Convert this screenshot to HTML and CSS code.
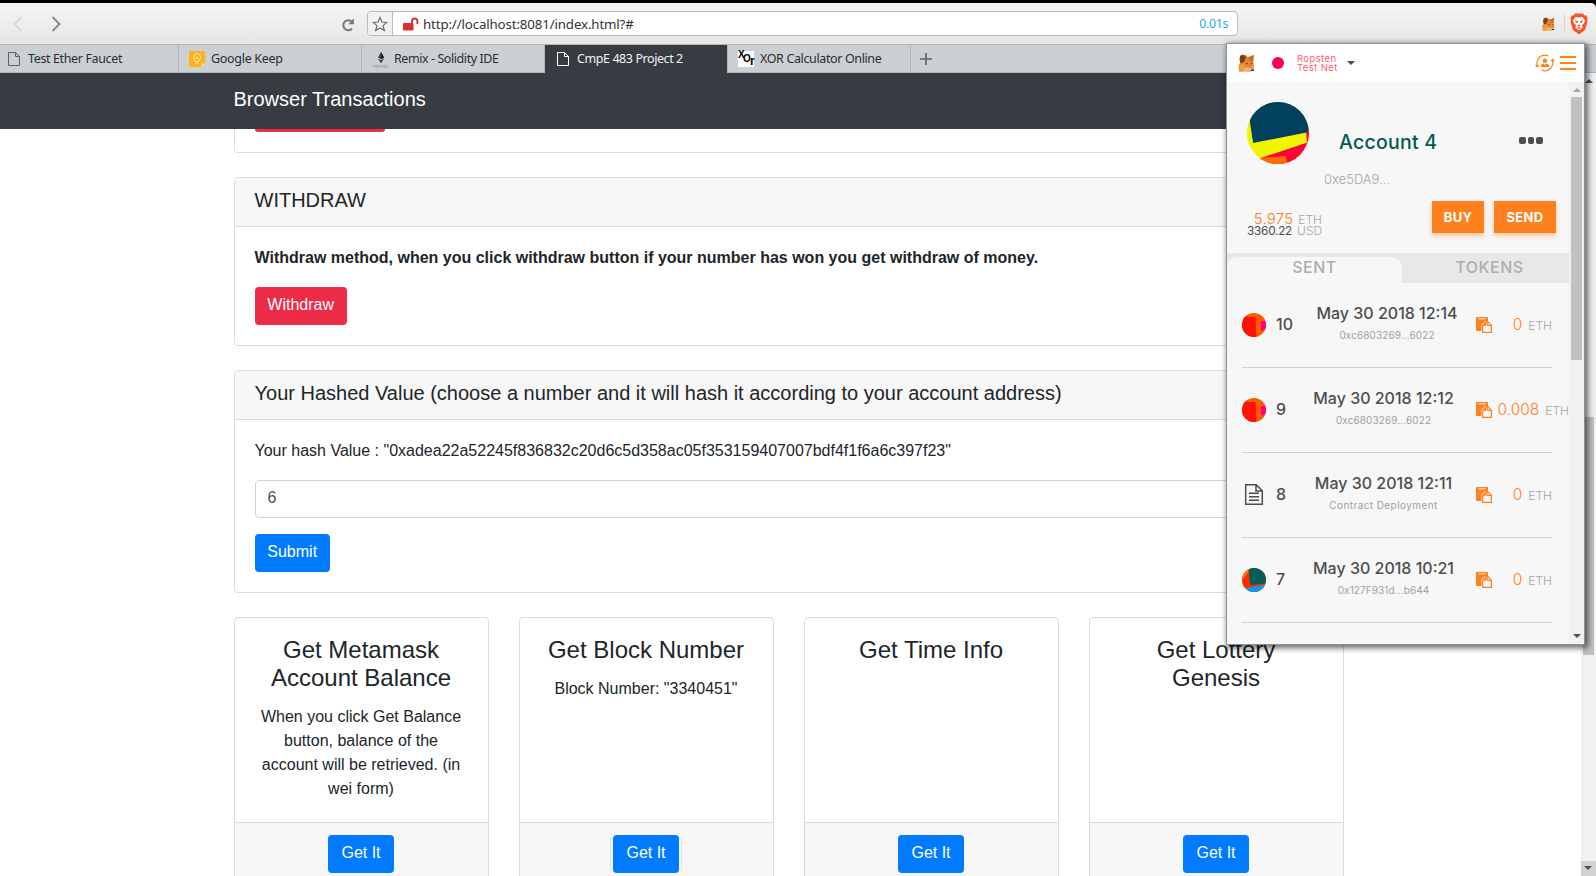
FILE: index.html
```html
<!DOCTYPE html>
<html lang="en">
<head>
<meta charset="utf-8">
<title>CmpE 483 Project 2</title>
<link rel="stylesheet" href="styles.css">
</head>
<body>
<svg class="defs" width="0" height="0" aria-hidden="true">
  <symbol id="page" viewBox="0 0 12 14"><path d="M.5.5h7l4 4v9H.5zM7.500.5v4h4" fill="none" stroke="currentColor"/></symbol>
  <symbol id="fox" viewBox="0 0 17 18">
    <path d="M2 2 7 .5 10 3l6-2-.6 7 .6 6-3 3.500H1L.5 12 2 9z" fill="#e8822f"/>
    <path d="M2 2 4.500.5 8 3 6 8 3 9.500 1.500 6z" fill="#7a3f1c"/>
    <path d="m10 3.500 6-2.500-1 5-2 2z" fill="#c96a2b"/>
    <path d="m1 12 4-3 2 4-2 4.500H1z" fill="#f29a3c"/>
    <path d="m7 13 4 1 4-1-2 4H5z" fill="#f0b27a"/>
    <path d="m8 9 2 .3-.5 1.200zM13 9l2 .2-1 1zM13 15.500h3.500L15.500 17H13z" fill="#3a2a22"/>
  </symbol>
  <symbol id="clip" viewBox="0 0 16 16">
    <path d="M0 1.200C0 .5.500 0 1.200 0h9.600c.7 0 1.200.5 1.200 1.200V4H9L5.500 7.500V14H1.200C.5 14 0 13.500 0 12.800z" fill="#ff801e"/>
    <path d="M2.500 1h7v1.500h-7z" fill="#ffc79c"/>
    <path d="M10.200 4.600h1.600l3.600 3.600v7.200H6.600V8.400z" fill="#f7f7f7" stroke="#ff801e" stroke-width="1.200"/>
    <path d="M10.500 4v4.800H6z" fill="#ff801e"/>
    <path d="M11.700 4.600v3.800h3.700" fill="none" stroke="#ff801e" stroke-width="1.100"/>
  </symbol>
  <symbol id="ident-a" viewBox="0 0 24 24">
    <clipPath id="ca"><circle cx="12" cy="12" r="12"/></clipPath>
    <g clip-path="url(#ca)"><path d="M0 0h24v24H0z" fill="#ff5a00"/><path d="M0 0h8L0 8z" fill="#c8145a"/><path d="M0 4h13.500l1 20H0z" fill="#ff1200"/><path d="M19 8h5v8l-5 2z" fill="#ff0080"/></g>
  </symbol>
  <symbol id="ident-b" viewBox="0 0 24 24">
    <clipPath id="cb"><circle cx="12" cy="12" r="12"/></clipPath>
    <g clip-path="url(#cb)"><path d="M0 0h24v24H0z" fill="#ff2a00"/><path d="m0 12 7-9-2-2-5 5z" fill="#ff7a10"/><path d="m6.500 0 1.700 17L24 15.500V0z" fill="#035e56"/><path d="m4 20 20-3.500V24H4z" fill="#0d98e8"/></g>
  </symbol>
</svg>

<div class="browser">
  <header class="toolbar">
    <div class="history">
      <svg width="10" height="16" viewBox="0 0 10 16"><path d="M8.500 1 1.500 8l7 7" fill="none" stroke="#d2d2d2" stroke-width="1.600"/></svg>
      <svg width="10" height="16" viewBox="0 0 10 16"><path d="m1.500 1 7 7-7 7" fill="none" stroke="#8a8a8a" stroke-width="1.900"/></svg>
    </div>
    <svg class="reload" width="14" height="14" viewBox="0 0 14 14"><path d="M10.800 3.600A5 5 0 1 0 11 10.600" fill="none" stroke="#747474" stroke-width="1.900"/><path d="M12.800.5v5.700H7.400z" fill="#747474"/></svg>
    <div class="address">
      <span class="star"><svg width="16" height="16" viewBox="0 0 16 16"><path d="m8 1.500 2 4.500 4.700.4-3.600 3.200 1.200 4.800L8 11.900l-4.300 2.500 1.200-4.800L1.300 6.400 6 6z" fill="none" stroke="#6a6a6a" stroke-width="1.200"/></svg></span>
      <svg class="lock" width="16" height="14" viewBox="0 0 16 14"><rect y="6" width="10.500" height="7.500" rx="1" fill="#d9302c"/><path d="M9 6.500V4.200a2.600 2.600 0 0 1 5.400 0V7" fill="none" stroke="#d9302c" stroke-width="1.900"/></svg>
      <span class="url">http://localhost:8081/index.html?#</span>
      <span class="time">0.01s</span>
    </div>
    <div class="extensions">
      <svg width="13" height="14"><use href="#fox"/></svg>
      <span class="divider"></span>
      <svg width="18" height="22" viewBox="0 0 18 22"><path d="M5 .5h8l1.500 2 1.500-.2 1.700 2.700-.7 2 .5 1.500-2.300 8.200L9 21.500l-6.200-4.800L.5 8.500 1 7 .3 5 2 2.300l1.500.2z" fill="#fb542b"/><path d="M9 4.500 12.500 4 15 7.500l-.8 2.500-2.200 2 .5 2.500L9 17.500 5.500 14.500 6 12l-2.200-2L3 7.500 5.500 4z" fill="#fff"/><path d="m4.800 7.300 3 .8.3 2-2.100-.6zM13.200 7.300l-3 .8-.3 2 2.100-.6zM7 12.500l2-1 2 1-2 1.200zM7 14.700l2-.7 2 .7-2 1.300z" fill="#fb542b"/></svg>
    </div>
  </header>

  <nav class="tabs">
    <div class="tab first"><svg width="12" height="14"><use href="#page"/></svg><span>Test Ether Faucet</span></div>
    <div class="tab keep"><svg width="16" height="16" viewBox="0 0 16 16"><path d="M0 0h16v12.500L12.500 16H0z" fill="#fbb31a"/><path d="M16 12.500h-3.500V16z" fill="#ffe3a0"/><path d="M6 10.500C6 8.500 4.500 8.200 4.500 6a3.500 3.500 0 0 1 7 0c0 2.200-1.500 2.500-1.500 4.500zM6.300 12.300h3.400M7 8V6.500l1 .7 1-.7V8" fill="none" stroke="#fff3d6" stroke-width=".8"/></svg><span>Google Keep</span></div>
    <div class="tab remix"><span class="remix-icon"><svg width="8" height="12" viewBox="0 0 8 12"><path d="M4 0 1 5.500l3 1.700 3-1.700z" fill="#444"/><path d="M4 0v7.200l3-1.700z" fill="#161616"/><path d="m1 6.500 3 4.700 3-4.700-3 1.700z" fill="#333"/></svg><small>remix</small></span><span>Remix - Solidity IDE</span></div>
    <div class="tab active"><svg width="12" height="14"><use href="#page"/></svg><span>CmpE 483 Project 2</span></div>
    <div class="tab xor"><span class="xor-icon"><i>X</i><i>O</i><i>r</i></span><span>XOR Calculator Online</span></div>
    <svg class="plus" width="12" height="12" viewBox="0 0 12 12"><path d="M6 0v12M0 6h12" stroke="#606468" stroke-width="1.700"/></svg>
  </nav>

  <div class="viewport">
    <main class="site">
      <div class="navbar">Browser Transactions</div>
      <div class="container">
        <section class="card clipped"><div class="stub"></div></section>
        <section class="card">
          <h5>WITHDRAW</h5>
          <div class="card-body">
            <p><b>Withdraw method, when you click withdraw button if your number has won you get withdraw of money.</b></p>
            <button class="btn danger">Withdraw</button>
          </div>
        </section>
        <section class="card">
          <h5>Your Hashed Value (choose a number and it will hash it according to your account address)</h5>
          <div class="card-body">
            <p>Your hash Value : "0xadea22a52245f836832c20d6c5d358ac05f353159407007bdf4f1f6a6c397f23"</p>
            <div class="input">6</div>
            <button class="btn primary">Submit</button>
          </div>
        </section>
        <div class="grid">
          <article class="card"><div class="info"><h4>Get Metamask<br>Account Balance</h4><p>When you click Get Balance button, balance of the account will be retrieved. (in wei form)</p></div><footer><button class="btn primary">Get It</button></footer></article>
          <article class="card"><div class="info"><h4>Get Block Number</h4><p>Block Number: "3340451"</p></div><footer><button class="btn primary focused">Get It</button></footer></article>
          <article class="card"><div class="info"><h4>Get Time Info</h4></div><footer><button class="btn primary">Get It</button></footer></article>
          <article class="card"><div class="info"><h4>Get Lottery<br>Genesis</h4></div><footer><button class="btn primary">Get It</button></footer></article>
        </div>
      </div>
    </main>
    <div class="scrollbar outer"><span class="arrow up"></span><span class="thumb"></span><span class="corner"><span class="arrow down"></span></span></div>
  </div>
</div>

<aside class="wallet">
  <header class="wallet-head">
    <svg width="17" height="18"><use href="#fox"/></svg>
    <span class="dot"></span>
    <span class="network">Ropsten<br>Test Net</span>
    <span class="caret"></span>
    <svg class="switch" width="20" height="18" viewBox="0 0 20 18"><g fill="none" stroke="#f7861c" stroke-width="1.300"><path d="M2.300 11.500A8 8 0 0 1 13.500 2M17.500 6.500A8 8 0 0 1 6.500 16"/></g><path d="m0 11 2.300 3L4.600 11zM15.200 7.300 17.700 4.500 20 7.300z" fill="#f7861c"/><circle cx="10" cy="6.700" r="2.300" fill="#f7861c"/><path d="M5.800 13v-1.500C6.500 10 8 9.800 8.800 9.500L10 11l1.200-1.500c.8.3 2.300.5 3 2V13z" fill="#f7861c"/></svg>
    <span class="burger"><i></i><i></i><i></i></span>
  </header>
  <div class="wallet-main">
    <div class="wallet-content">
      <div class="account">
        <svg class="avatar" width="62" height="62" viewBox="0 0 62 62"><clipPath id="cc"><circle cx="31" cy="31" r="31"/></clipPath><g clip-path="url(#cc)"><path d="M0 0h62v62H0z" fill="#f2f500"/><path d="M0 0h62v30L6 41z" fill="#02405f"/><path d="M0 18 2 22 6 41 0 50z" fill="#f2f500"/><path d="m59 30 3-1v12h-2z" fill="#ff0038"/><path d="M11 57 62 40v22H11z" fill="#ff0038"/><path d="m12 56 27-2 1 8H12z" fill="#ff6d00"/></g></svg>
        <div class="who"><strong>Account 4</strong><span>0xe5DA9...</span></div>
        <div class="more"><i></i><i></i><i></i></div>
      </div>
      <div class="funds">
        <div class="balance">
          <div class="eth"><b>5.975</b><span>ETH</span></div>
          <div class="usd"><b>3360.22</b><span>USD</span></div>
        </div>
        <button class="pay buy">BUY</button><button class="pay send">SEND</button>
      </div>
      <div class="wtabs"><span class="on">SENT</span><span>TOKENS</span></div>
      <div class="txs">
        <div class="tx"><svg width="24" height="24"><use href="#ident-a"/></svg><b class="num">10</b><div class="when w1"><b>May 30 2018 12:14</b><span>0xc6803269...6022</span></div><svg width="16" height="16"><use href="#clip"/></svg><div class="amt"><b>0</b><span>ETH</span></div></div>
        <div class="tx"><svg width="24" height="24"><use href="#ident-a"/></svg><b class="num">9</b><div class="when"><b>May 30 2018 12:12</b><span>0xc6803269...6022</span></div><svg width="16" height="16"><use href="#clip"/></svg><div class="amt wide"><b>0.008</b><span>ETH</span></div></div>
        <div class="tx"><svg width="24" height="24" viewBox="0 0 24 24"><path d="M3.700 1.700h10.500l6.100 6v13.600H3.700zM14 1.700v6.200h6.300" fill="none" stroke="#4d4d4d" stroke-width="1.500"/><path d="M7 10.200h10M7 13.700h10M7 17.200h10" stroke="#4d4d4d" stroke-width="1.400"/></svg><b class="num">8</b><div class="when"><b>May 30 2018 12:11</b><span class="deploy">Contract Deployment</span></div><svg width="16" height="16"><use href="#clip"/></svg><div class="amt"><b>0</b><span>ETH</span></div></div>
        <div class="tx"><svg width="24" height="24"><use href="#ident-b"/></svg><b class="num">7</b><div class="when"><b>May 30 2018 10:21</b><span>0x127F931d...b644</span></div><svg width="16" height="16"><use href="#clip"/></svg><div class="amt"><b>0</b><span>ETH</span></div></div>
      </div>
    </div>
    <div class="scrollbar inner"><span class="arrow up"></span><span class="thumb"></span><span class="arrow down"></span></div>
  </div>
</aside>
</body>
</html>
```

FILE: styles.css
```css
* { box-sizing: border-box; }
body { margin: 0; width: 1596px; height: 876px; overflow: hidden; background: #000; font: 16px/24px "Liberation Sans", Arial, sans-serif; color: #212529; }
.defs { position: absolute; }
svg { flex: none; display: block; }
h4, h5, p { margin: 0; font-weight: 400; }
button { border: 0; font-family: inherit; }

.browser { display: flex; flex-direction: column; height: 876px; padding-top: 3px; }
.toolbar { display: flex; align-items: center; height: 41px; background: linear-gradient(#f5f5f5, #e6e6e6); border-radius: 0 5px 0 0; font-family: "Noto Sans", sans-serif; }
.history { display: flex; gap: 28px; padding-left: 13px; width: 341px; }
.reload { margin-right: 12px; margin-top: 2px; }
.address { display: flex; align-items: center; width: 871px; height: 25px; background: #fff; border: 1px solid #b8babd; border-radius: 4px; }
.star { display: flex; align-items: center; padding-left: 4px; width: 25px; height: 23px; background: #f1f1f1; border-right: 1px solid #b8babd; border-radius: 3px 0 0 3px; }
.lock { margin: 0 4px 0 10px; }
.url { font-size: 13.3px; color: #333; letter-spacing: -.14px; flex: 1; }
.time { font-size: 12.5px; color: #1fa8ee; letter-spacing: -.4px; padding-right: 9px; }
.extensions { display: flex; align-items: center; margin-left: 304px; }
.divider { width: 1px; height: 19px; background: #d6d6d6; margin: 0 5px 0 9px; }

.tabs { display: flex; height: 29px; background: #cbd0d4; border-top: 1px solid #b0b5b9; border-bottom: 1px solid #b0b5b9; font: 12.5px/27px "Noto Sans", sans-serif; letter-spacing: -.37px; color: #2b2d2f; }
.tab { display: flex; align-items: center; gap: 9px; width: 183px; padding-left: 10px; border-right: 1px solid #b0b5b9; white-space: nowrap; }
.tab svg { color: #5d6165; }
.tab.first { width: 179px; padding-left: 8px; gap: 8px; }
.tab.keep { gap: 6px; letter-spacing: -.3px; }
.tab.remix { gap: 6px; padding-left: 11px; letter-spacing: -.43px; }
.tab.active { background: #363c42; color: #f3f3f3; height: 28px; padding: 0 0 1px 12px; gap: 8px; letter-spacing: -.42px; }
.tab.active svg { color: #fff; }
.tab.xor { gap: 6px; }
.remix-icon { display: flex; flex-direction: column; align-items: center; width: 15px; padding-top: 4px; }
.remix-icon small { font: 6px/5px "Noto Sans", sans-serif; letter-spacing: 0; color: #8c9296; }
.xor-icon { display: flex; width: 16px; height: 16px; background: #fff; color: #000; }
.xor-icon i { font: 700 10px/7px "Liberation Sans", sans-serif; width: 5px; letter-spacing: -1px; }
.xor-icon i:nth-child(2) { padding-top: 4px; }
.xor-icon i:nth-child(3) { padding: 7px 0 0 2px; font-size: 12px; }
.plus { margin: 8px 0 0 9px; }

.viewport { display: flex; height: 803px; }
.site { width: 1581px; height: 803px; background: #fff; overflow: hidden; }
.navbar { height: 56px; padding: 12px 233.5px; background: #363c42; color: #fff; font-size: 20px; line-height: 28px; }
.container { width: 1110px; margin-left: 233.5px; display: flex; flex-direction: column; gap: 24px; }
.card { border: 1px solid #dcdcdc; border-radius: 4px; background: #fff; }
.card.clipped { height: 24px; border-top: 0; border-radius: 0 0 4px 4px; padding-left: 20px; }
.stub { width: 130px; height: 3px; background: #ee2b47; border-radius: 0 0 4px 4px; }
.card h5 { height: 49px; padding: 10px 20px; background: #f7f7f7; border-bottom: 1px solid #d9d9d9; border-radius: 3px 3px 0 0; font-size: 20px; line-height: 24px; }
.card-body { padding: 19px 20px 20px; }
.card-body p { margin-bottom: 17px; }
.btn { display: block; height: 38px; padding: 0 12.8px 2px; border-radius: 4px; color: #fff; font-size: 16px; line-height: 36px; }
.danger { background: #ee2b47; }
.primary { background: #007bff; }
.input { height: 38px; padding: 5px 12px; margin-bottom: 16px; border: 1px solid #ced4da; border-radius: 4px; color: #495057; }
.grid { display: grid; grid-template-columns: repeat(4, 255px); gap: 30px; }
.grid .card { text-align: center; }
.info { height: 204px; padding: 18px 20px 0; }
.info h4 { font-size: 24px; line-height: 28px; margin-bottom: 13px; }
.grid footer { display: flex; justify-content: center; height: 63px; padding-top: 12px; background: #f7f7f7; border-top: 1px solid #d9d9d9; }
.grid .btn { width: 66px; padding: 0 0 2px; }
.focused { position: relative; }
.focused::before { content: ""; position: absolute; inset: 2px -3px; border: solid #d5e8fc; border-width: 0 1px; }

.scrollbar { display: flex; flex-direction: column; align-items: center; width: 15px; background: #f1f1f1; }
.thumb { width: 11px; background: #c1c1c1; }
.arrow { border: solid transparent; border-width: 0 4px; }
.arrow.up { border-bottom: 4px solid #505050; }
.arrow.down { border-top: 4px solid #505050; }
.outer { height: 803px; }
.outer .up { margin-top: 6px; }
.outer .thumb { height: 238px; margin-top: 334px; }
.corner { width: 15px; height: 15px; background: #d2d2d2; margin-top: auto; padding: 5px 0 0 3px; }
.corner .arrow { display: block; width: 8px; }

.wallet { position: absolute; left: 1226px; top: 43px; width: 359px; height: 602px; display: flex; flex-direction: column; background: #f7f7f7; border: 1px solid #8e9195; box-shadow: 2px 2px 6px 1px rgba(0, 0, 0, .6); font-family: Inter, sans-serif; color: #4d4d4d; }
.wallet b { font-weight: 500; }
.wallet-head { display: flex; align-items: center; height: 38px; padding: 0 8px 0 11px; background: #fff; }
.dot { width: 12px; height: 12px; border-radius: 50%; background: #ff0050; margin: 0 13px 0 17px; }
.network { font-size: 9.5px; line-height: 9px; color: #ff5a78; letter-spacing: .4px; width: 46px; }
.caret { border: solid transparent; border-width: 0 4px; border-top: 4px solid #4d4d4d; margin-left: 4px; }
.switch { margin-left: auto; }
.burger { display: flex; flex-direction: column; gap: 4px; margin-left: 5px; }
.burger i { width: 16px; height: 2px; background: #f7861c; }
.wallet-main { display: flex; height: 562px; }
.wallet-content { width: 342px; overflow: hidden; }
.inner .up { border-bottom-color: #a3a3a3; margin-top: 6px; }
.inner .thumb { height: 263px; margin-top: 5px; }
.inner .down { margin: auto 0 6px; }
.account { display: flex; height: 114px; padding: 20px 0 0 20px; }
.who { display: flex; flex-direction: column; margin-left: 15px; width: 180px; }
.who strong { font-size: 19.5px; font-weight: 500; line-height: 24px; color: #03594f; padding: 28px 0 0 15px; letter-spacing: .25px; }
.who span { font-size: 13px; font-weight: 300; line-height: 16px; color: #a5a5a5; padding-top: 17px; }
.more { display: flex; gap: 2px; margin: 35px 0 0 15px; }
.more i { width: 6.500px; height: 7px; border-radius: 2px; background: #4d4d4d; }
.funds { display: flex; height: 57px; padding: 5px 13px 0 20px; }
.balance { display: flex; flex-direction: column; gap: 1px; width: 75px; padding-top: 11px; text-align: right; margin-right: 110px; }
.eth { height: 12px; line-height: 12px; white-space: nowrap; }
.eth b { font-size: 15px; line-height: 12px; font-weight: 300; color: #ff801e; margin-right: 5px; letter-spacing: .2px; }
.balance span, .amt span { font-size: 12px; font-weight: 300; color: #a5a5a5; }
.eth span { line-height: 12px; }
.usd { font-size: 11.8px; line-height: 11px; height: 11px; white-space: nowrap; }
.balance .usd b { font-weight: 400; margin-right: 5px; letter-spacing: -.25px; }
.balance .usd span { line-height: 11px; letter-spacing: 0; }
.pay { height: 32px; width: 52px; padding: 0; background: #ff801e; color: #fff; font-size: 13px; font-weight: 700; line-height: 32px; letter-spacing: .3px; box-shadow: 0 3px 5px rgba(247, 134, 28, .4); }
.send { width: 62px; margin-left: 10px; }
.wtabs { display: flex; align-items: flex-end; height: 30px; background: #e8e8e8; color: #aeaeae; font-size: 16px; font-weight: 500; }
.wtabs span { width: 167px; height: 26px; line-height: 20px; text-align: center; padding-left: 8px; letter-spacing: .5px; }
.wtabs .on { width: 175px; padding: 0; background: #f7f7f7; border-radius: 10px 10px 0 0; }
.txs { padding: 0 17px 0 15px; }
.tx { display: flex; align-items: center; height: 85px; padding-bottom: 1px; border-bottom: 1px solid #cfcfcf; white-space: nowrap; }
.num { width: 31px; margin-left: 10px; font-size: 16px; line-height: 24px; padding-bottom: 1px; }
.when { display: flex; flex-direction: column; align-items: center; width: 153px; margin-right: 16px; height: 47px; }
.when b { font-size: 16px; line-height: 24px; }
.when span { font-size: 10px; line-height: 14px; color: #a0a0a0; letter-spacing: .1px; padding-top: 3px; }
.when .deploy { letter-spacing: .42px; }
.w1 { padding-left: 7px; }
.amt { flex: 1; text-align: right; padding-top: 1px; }
.amt b { font-size: 15.5px; font-weight: 300; color: #ff801e; margin-right: 6px; }
.amt.wide { margin-right: -17px; }
```
